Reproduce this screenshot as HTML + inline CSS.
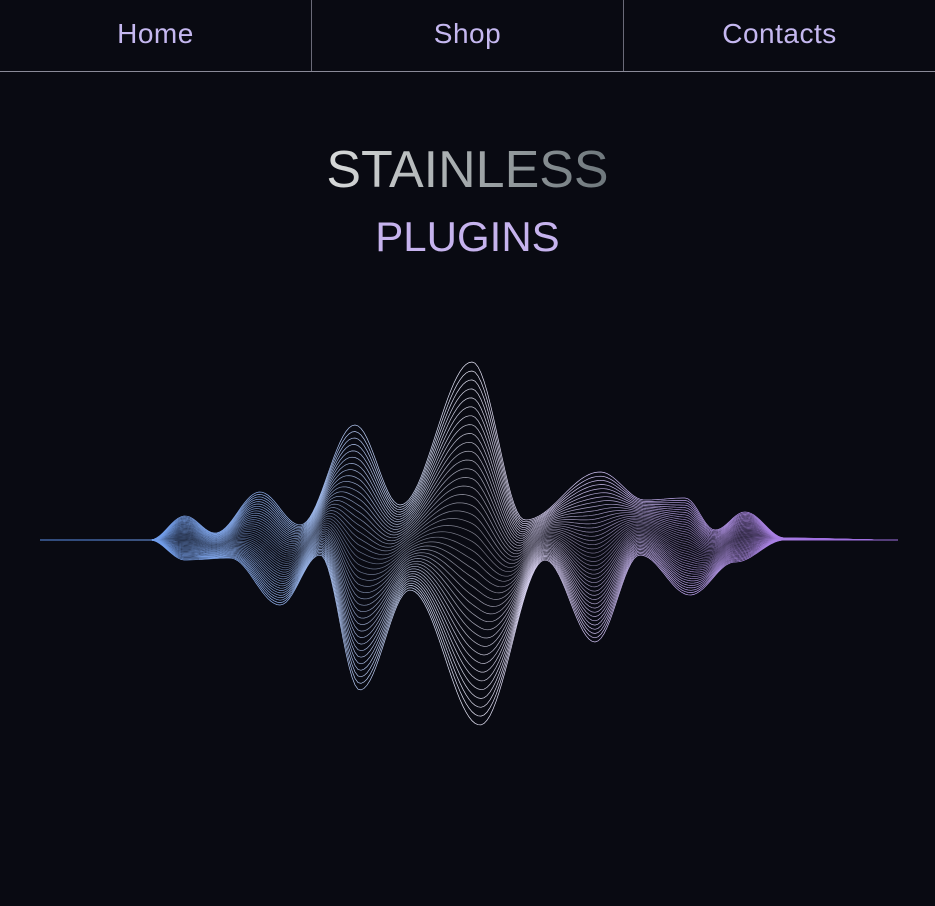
<!DOCTYPE html>
<html><head><meta charset="utf-8"><style>
html,body{margin:0;padding:0;background:#090a12;width:935px;height:906px;overflow:hidden;font-family:"Liberation Sans",sans-serif}
nav{display:flex;height:71px;border-bottom:1px solid #8a8a98}
nav div{flex:1;display:flex;align-items:center;justify-content:center;color:#c5b8f0;font-size:28px;letter-spacing:0.5px;padding-bottom:4px;box-sizing:border-box}
nav div+div{border-left:1px solid #6a6a78}
h1{position:absolute;top:140px;left:0;width:935px;margin:0;text-align:center;font-weight:normal;font-size:52px;letter-spacing:0px;background:linear-gradient(90deg,#d8dada 35%,#6e777c 65%);-webkit-background-clip:text;color:transparent}
h2{position:absolute;top:213px;left:0;width:935px;margin:0;text-align:center;font-weight:normal;font-size:42px;color:#c6b3ee}
svg{position:absolute;left:0;top:0}
</style></head><body>
<nav><div>Home</div><div>Shop</div><div>Contacts</div></nav>
<h1>STAINLESS</h1>
<h2>PLUGINS</h2>
<svg width="935" height="906" id="s">
<defs><linearGradient id="g" x1="0" x2="1"><stop offset="0.05" stop-color="#5a8ee8"/><stop offset="0.3" stop-color="#9ab8f0"/><stop offset="0.5" stop-color="#e8e8f8"/><stop offset="0.75" stop-color="#c0a8f0"/><stop offset="0.9" stop-color="#a070e0"/></linearGradient></defs>
<g id="w" fill="none" stroke="url(#g)" stroke-width="0.7"></g>
</svg>
<script>
var top_=[[40,540],[150,540],[185,516],[215,533],[260,492],[300,525],[355,425],[400,505],[472,362],[525,520],[600,472],[645,500],[685,498],[715,530],[745,512],[785,538],[900,540]];
var bot=[[40,540],[150,540],[185,560],[230,558],[280,605],[320,555],[360,690],[410,590],[480,725],[545,560],[595,642],[640,555],[690,595],[735,562],[785,540],[900,540]];
function f(p,x){for(var i=0;i<p.length-1;i++){if(x<=p[i+1][0]){var t=(x-p[i][0])/(p[i+1][0]-p[i][0]);var s=(1-Math.cos(Math.PI*t))/2;return p[i][1]+(p[i+1][1]-p[i][1])*s}}return 540}
var g=document.getElementById('w'),h='';
for(var k=0;k<=40;k++){var a=k/40,d='';for(var x=40;x<=900;x+=3){var y=f(top_,x)*(1-a)+f(bot,x)*a;d+=(x==40?'M':'L')+x+' '+y.toFixed(1)}
h+='<path d="'+d+'" stroke-opacity="'+(0.5+0.5*Math.abs(a-0.5)*2)+'"/>'}
g.innerHTML=h;
</script>
</body></html>
